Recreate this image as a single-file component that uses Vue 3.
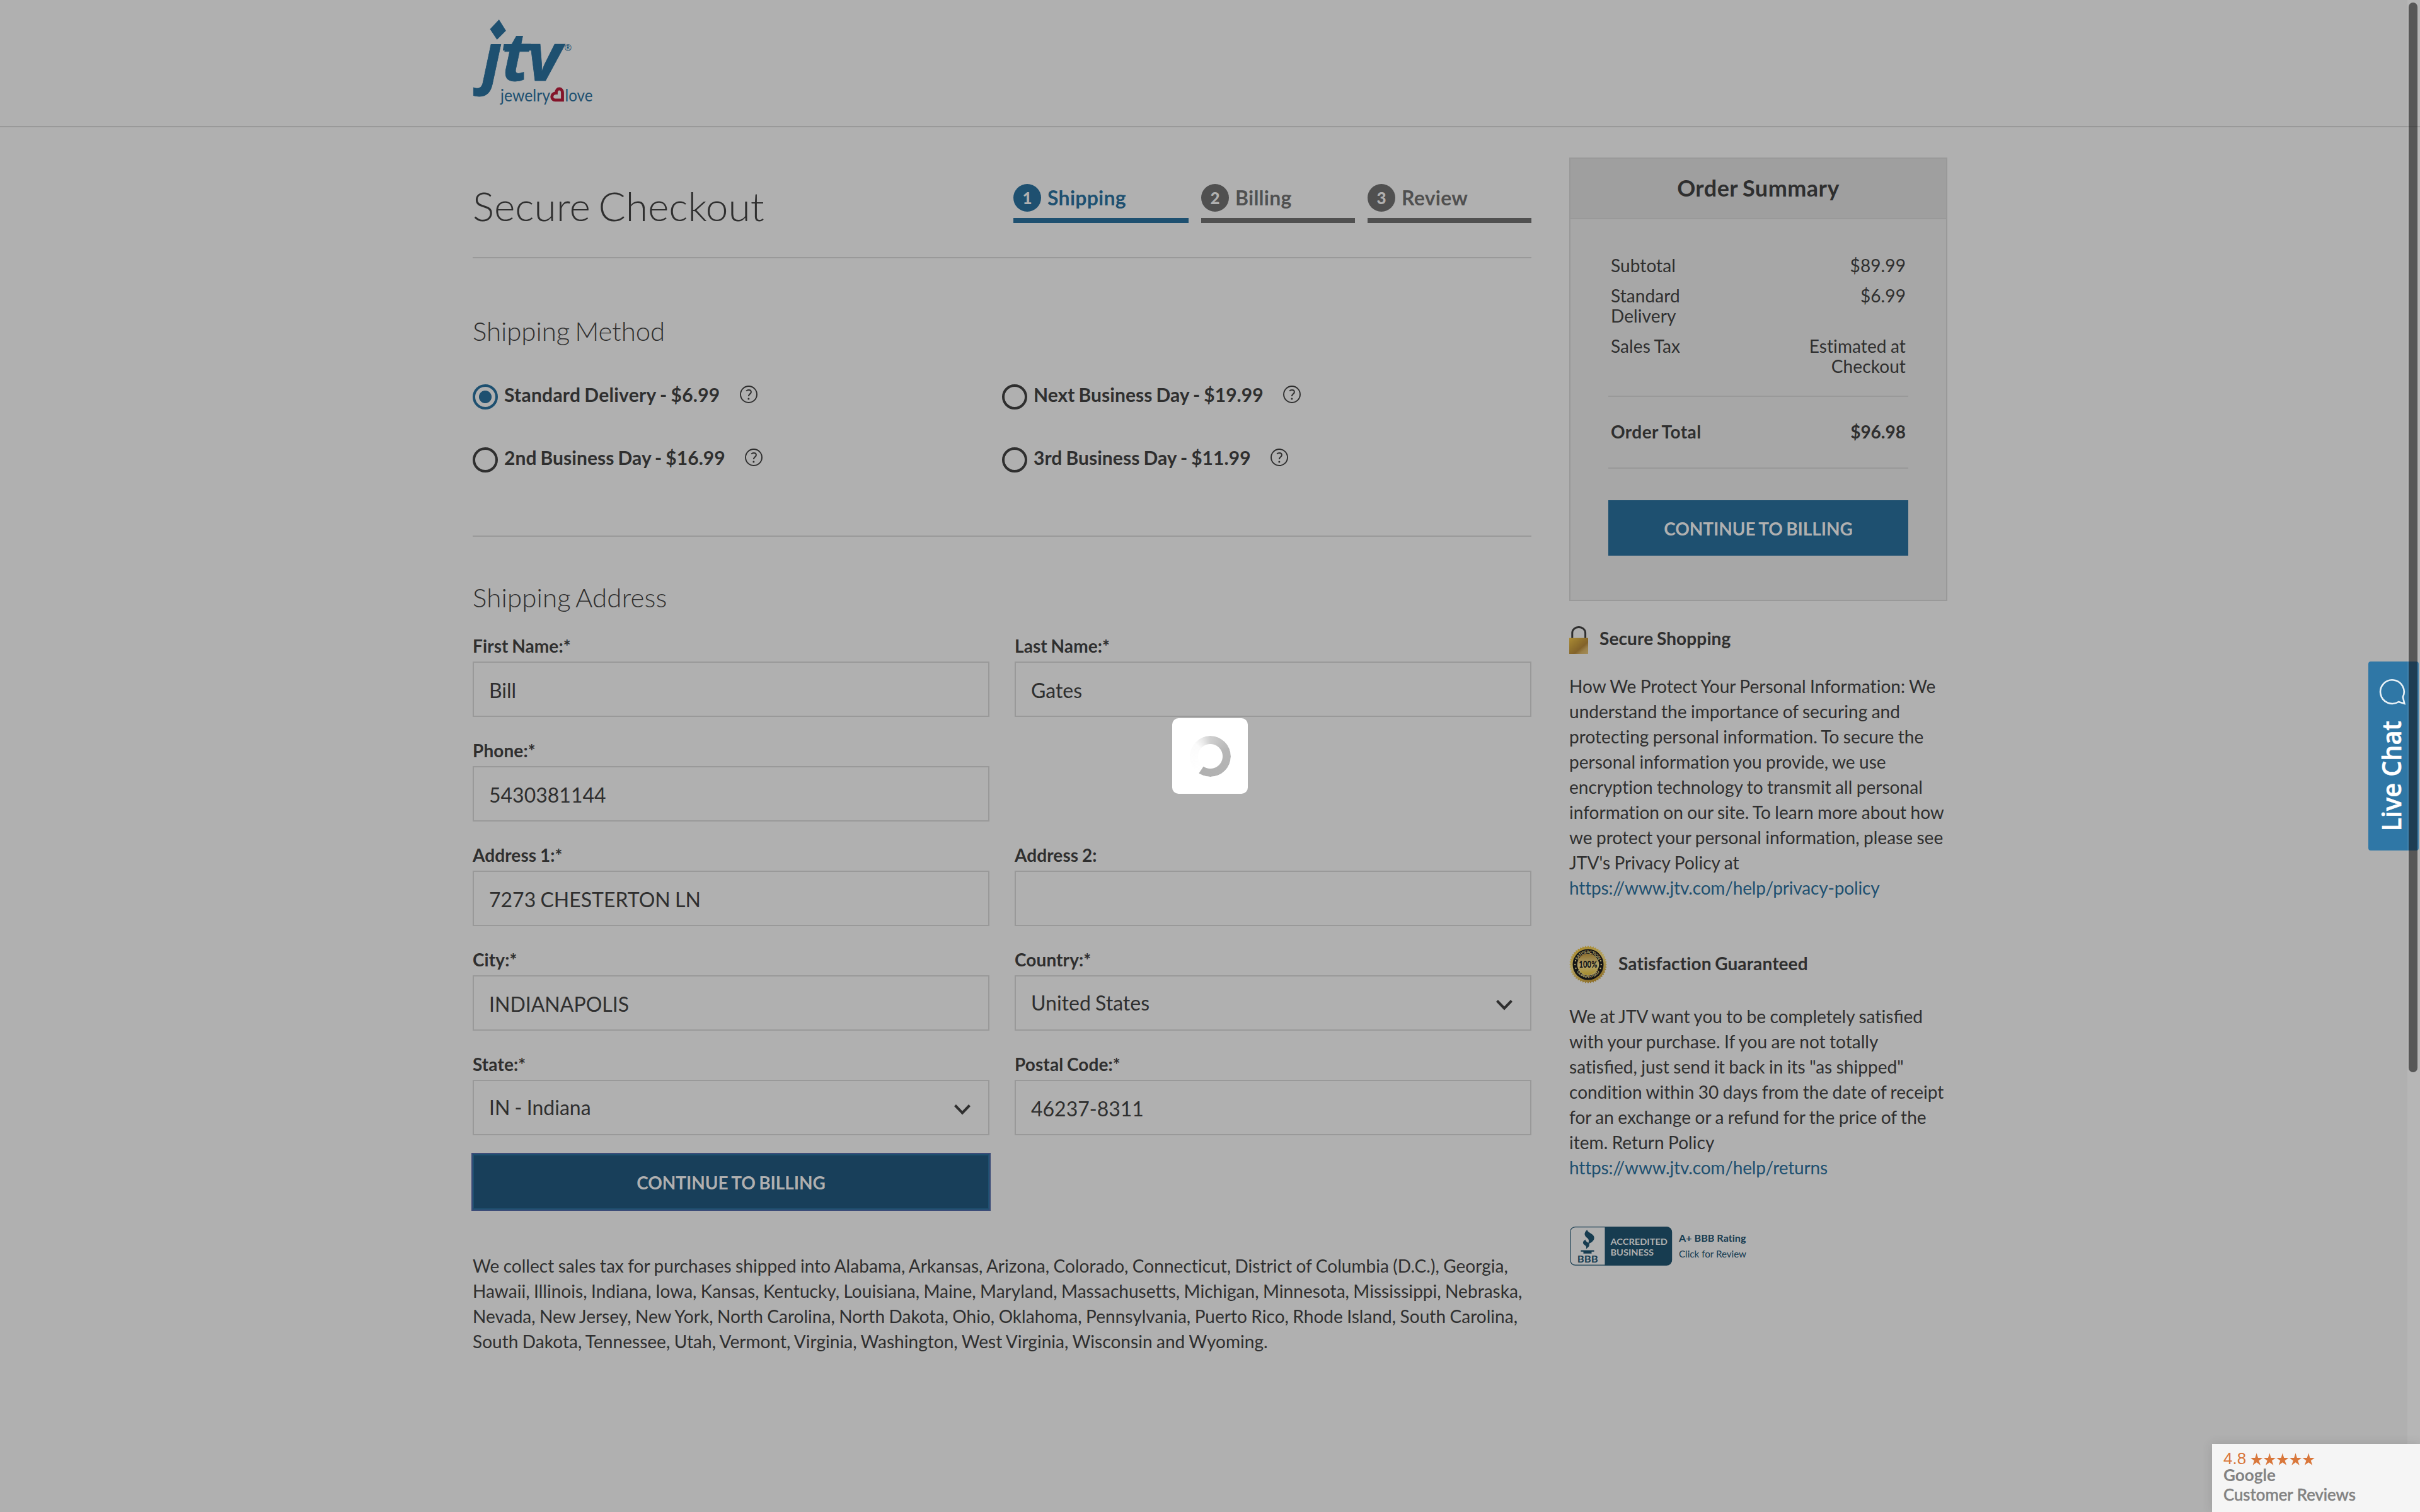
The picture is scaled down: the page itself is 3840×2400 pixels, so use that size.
<script setup>
const steps = [
  { n: 1, name: 'Shipping', active: true },
  { n: 2, name: 'Billing' },
  { n: 3, name: 'Review' },
]
const methods = [
  { label: 'Standard Delivery - $6.99', checked: true },
  { label: 'Next Business Day - $19.99' },
  { label: '2nd Business Day - $16.99' },
  { label: '3rd Business Day - $11.99' },
]
const fields = [
  { label: 'First Name:*', value: 'Bill' },
  { label: 'Last Name:*', value: 'Gates' },
  { label: 'Phone:*', value: '5430381144' },
  null,
  { label: 'Address 1:*', value: '7273 CHESTERTON LN' },
  { label: 'Address 2:', value: '' },
  { label: 'City:*', value: 'INDIANAPOLIS' },
  { label: 'Country:*', value: 'United States', select: true },
  { label: 'State:*', value: 'IN - Indiana', select: true },
  { label: 'Postal Code:*', value: '46237-8311' },
]
const taxLines = [
  'We collect sales tax for purchases shipped into Alabama, Arkansas, Arizona, Colorado, Connecticut, District of Columbia (D.C.), Georgia,',
  'Hawaii, Illinois, Indiana, Iowa, Kansas, Kentucky, Louisiana, Maine, Maryland, Massachusetts, Michigan, Minnesota, Mississippi, Nebraska,',
  'Nevada, New Jersey, New York, North Carolina, North Dakota, Ohio, Oklahoma, Pennsylvania, Puerto Rico, Rhode Island, South Carolina,',
  'South Dakota, Tennessee, Utah, Vermont, Virginia, Washington, West Virginia, Wisconsin and Wyoming.',
]
const secureLines = [
  'How We Protect Your Personal Information: We',
  'understand the importance of securing and',
  'protecting personal information. To secure the',
  'personal information you provide, we use',
  'encryption technology to transmit all personal',
  'information on our site. To learn more about how',
  'we protect your personal information, please see',
  "JTV's Privacy Policy at",
]
const satisfiedLines = [
  'We at JTV want you to be completely satisfied',
  'with your purchase. If you are not totally',
  'satisfied, just send it back in its "as shipped"',
  'condition within 30 days from the date of receipt',
  'for an exchange or a refund for the price of the',
  'item. Return Policy',
]
// Serrated edge of the guarantee seal
const sealPoints = Array.from({ length: 88 }, (_, i) => {
  const r = i % 2 ? 27.6 : 30
  const a = (i / 88) * Math.PI * 2
  return `${(30 + r * Math.cos(a)).toFixed(2)},${(30 + r * Math.sin(a)).toFixed(2)}`
}).join(' ')
const starX = [0, 20.6, 41.2, 61.8, 82.4]
</script>

<template>
  <div class="page">
    <header class="top">
      <div class="wrap">
        <svg class="logo" width="200" height="180" viewBox="0 0 200 180">
          <defs>
            <clipPath id="stem"><rect x="-10" y="70" width="80" height="100" /></clipPath>
          </defs>
          <g fill="#1e5070">
            <path d="M41.8 31 52.9 48.7 38.6 63 27.5 46.3z" />
            <g class="mark">
              <g clip-path="url(#stem)"><text x="15" y="127.5">j</text></g>
              <text x="46" y="127.5">t</text>
              <text x="86.500" y="127.5">v</text>
            </g>
            <path d="M49.5 70h55v10.300h-56.600z" />
            <text class="reg" x="145.500" y="81">®</text>
            <text class="tag" x="44" y="160.500" textLength="79" lengthAdjust="spacingAndGlyphs">jewelry</text>
            <text class="tag" x="146.500" y="160.500" textLength="44" lengthAdjust="spacingAndGlyphs">love</text>
          </g>
          <path d="M142.500 158.800h-11.500c-7 0-7.500-11 1.500-11.200 0-9 10-8.500 10-.5z" fill="none" stroke="#84142a" stroke-width="4.800" />
        </svg>
      </div>
    </header>

    <div class="wrap columns">
      <main>
        <div class="title-row">
          <h1>Secure Checkout</h1>
          <ol class="steps">
            <li v-for="s in steps" :key="s.n" :class="{ active: s.active }">
              <b>{{ s.n }}</b><span>{{ s.name }}</span>
            </li>
          </ol>
        </div>

        <section class="methods">
          <h2>Shipping Method</h2>
          <div class="radios">
            <div v-for="m in methods" :key="m.label" class="method">
              <i class="radio" :class="{ checked: m.checked }"></i>
              <span>{{ m.label }}</span>
              <svg width="28" height="28" viewBox="0 0 28 28" fill="none" stroke="#2f2f2f">
                <circle cx="14" cy="14" r="13" stroke-width="1.900" />
                <path d="M10.200 8.600c1-1.200 2.300-1.700 3.800-1.700 2.300 0 3.900 1.300 3.900 3.300 0 3.100-4 3.200-4 6.900" stroke-width="2" />
                <circle cx="13.900" cy="21" r="1.500" fill="#2f2f2f" stroke="none" />
              </svg>
            </div>
          </div>
        </section>

        <section class="address">
          <h2>Shipping Address</h2>
          <div class="fields">
            <div v-for="(f, i) in fields" :key="i" class="field">
              <template v-if="f">
                <label>{{ f.label }}</label>
                <div class="input" :class="{ select: f.select }">
                  <span>{{ f.value }}</span>
                  <svg v-if="f.select" width="28" height="18" viewBox="0 0 28 18" fill="none" stroke="#2f2f2f" stroke-width="4">
                    <path d="M2.500 2.500 14 14.500 25.500 2.500" />
                  </svg>
                </div>
              </template>
            </div>
          </div>
          <div class="button focused">CONTINUE TO BILLING</div>
        </section>

        <p class="copy tax"><span v-for="l in taxLines" :key="l">{{ l }}</span></p>
      </main>

      <aside>
        <div class="summary">
          <h3>Order Summary</h3>
          <div class="summary-body">
            <dl>
              <div><dt>Subtotal</dt><dd>$89.99</dd></div>
              <div><dt>Standard<br />Delivery</dt><dd>$6.99</dd></div>
              <div><dt>Sales Tax</dt><dd>Estimated at<br />Checkout</dd></div>
            </dl>
            <div class="total"><span>Order Total</span><span class="sum">$96.98</span></div>
            <div class="button">CONTINUE TO BILLING</div>
          </div>
        </div>

        <div class="note secure">
          <svg width="30" height="44" viewBox="0 0 30 44">
            <defs>
              <linearGradient id="brass" x1="0" y1="0" x2="1" y2="1">
                <stop offset="0" stop-color="#ab8b35" /><stop offset=".35" stop-color="#93742d" />
                <stop offset=".62" stop-color="#82622a" /><stop offset=".78" stop-color="#9a8049" /><stop offset="1" stop-color="#a38d5a" />
              </linearGradient>
            </defs>
            <path d="M4.800 21V11c0-12.700 20.800-12.700 20.800 0v10" fill="none" stroke="#2f2f2f" stroke-width="3" />
            <rect y="18.700" width="30" height="25.300" fill="url(#brass)" />
          </svg>
          <strong>Secure Shopping</strong>
        </div>
        <p class="copy"><span v-for="l in secureLines" :key="l">{{ l }}</span><a>https://www.jtv.com/help/privacy-policy</a></p>

        <div class="note satisfied">
          <svg width="60" height="60" viewBox="0 0 60 60">
            <defs>
              <linearGradient id="gold" x1=".3" y1="0" x2=".7" y2="1">
                <stop offset="0" stop-color="#a8892b" /><stop offset=".45" stop-color="#b5a360" /><stop offset="1" stop-color="#8a6a22" />
              </linearGradient>
              <linearGradient id="face" x1="0" y1="0" x2="0" y2="1">
                <stop offset="0" stop-color="#8c6f30" /><stop offset=".55" stop-color="#b3a36c" /><stop offset="1" stop-color="#a58a28" />
              </linearGradient>
              <path id="arcTop" d="M12.500 30a17.500 17.500 0 0 1 35 0" />
              <path id="arcBottom" d="M8.700 30a21.300 21.300 0 0 0 42.600 0" />
            </defs>
            <polygon :points="sealPoints" fill="url(#gold)" />
            <circle cx="30" cy="30" r="24.500" fill="#141414" />
            <circle cx="30" cy="30" r="17.300" fill="url(#face)" />
            <g class="seal-ring" fill="#b3a36c">
              <text><textPath href="#arcTop" startOffset="50%" text-anchor="middle" textLength="41">SATISFACTION</textPath></text>
              <text><textPath href="#arcBottom" startOffset="50%" text-anchor="middle" textLength="43">GUARANTEED</textPath></text>
              <circle cx="10" cy="24" r="1.200" /><circle cx="9.200" cy="30" r="1.200" /><circle cx="10.500" cy="36" r="1.200" />
              <circle cx="50" cy="24" r="1.200" /><circle cx="50.800" cy="30" r="1.200" /><circle cx="49.500" cy="36" r="1.200" />
            </g>
            <text class="seal-num" x="15.500" y="35" textLength="29" lengthAdjust="spacingAndGlyphs">100%</text>
          </svg>
          <strong>Satisfaction Guaranteed</strong>
        </div>
        <p class="copy">
          <span v-for="l in satisfiedLines" :key="l"><template v-for="(part, i) in l.split('fi')" :key="i"><em v-if="i">fi</em>{{ part }}</template></span>
          <a>https://www.jtv.com/help/returns</a>
        </p>

        <svg class="bbb" width="290" height="64" viewBox="0 0 290 64">
          <rect x="1.600" y="1.600" width="161" height="60.500" rx="8" fill="none" stroke="#173c50" stroke-width="1.200" />
          <path d="M56.500 1H154a9 9 0 0 1 9 9v43.500a9 9 0 0 1-9 9H56.500z" fill="#173c50" />
          <g fill="#173c50">
            <path d="M28.500 6c-6 5-4.500 9.500 0 13 3.500 2.800 3 6 .8 10C40.500 25 42.500 17.500 36 13c-4.500-3-7-4-7.500-7z" />
            <path d="M25.500 21.500c-5.500 4-4 7 0 9.500 1.700 1.200 1.900 3 1.200 5.500 6-4 7-7.500 2.500-10.500-2.200-1.500-3.200-2.500-3.700-4.500z" />
            <path d="M18.500 38.500h21v2.300h-21zM22.500 40.800h13v3h-13z" />
            <text class="bb" x="12.800" y="58" font-size="16" textLength="33" lengthAdjust="spacingAndGlyphs">BBB</text>
            <text class="bb" x="174" y="25" font-size="14.500" textLength="106.500" lengthAdjust="spacingAndGlyphs">A+ BBB Rating</text>
            <text class="light" x="174" y="50" font-size="15.500" textLength="107" lengthAdjust="spacingAndGlyphs">Click for Review</text>
          </g>
          <g fill="#b0b0b0">
            <text class="bb" x="65.500" y="30" font-size="14" textLength="90.500" lengthAdjust="spacingAndGlyphs">ACCREDITED</text>
            <text class="bb" x="65.500" y="46.800" font-size="14" textLength="68.500" lengthAdjust="spacingAndGlyphs">BUSINESS</text>
          </g>
        </svg>
      </aside>
    </div>

    <div class="loader"><i></i></div>

    <svg class="chat" width="80" height="300" viewBox="0 0 80 300">
      <rect width="80" height="300" rx="4" fill="#2f77a6" />
      <path d="M48 64 57.300 66.800 54.800 56.400A18.800 18.800 0 1 0 48 64z" fill="none" stroke="#eaf2f7" stroke-width="2.600" />
      <text transform="translate(52 269.500) rotate(-90)" textLength="175.500" lengthAdjust="spacingAndGlyphs">Live Chat</text>
    </svg>

    <div class="track"><i></i></div>

    <svg class="google" width="330" height="108" viewBox="0 0 330 108">
      <rect width="330" height="108" fill="#f5f5f5" />
      <text x="18" y="31.500" class="score">4.8</text>
      <path v-for="x in starX" :key="x" :transform="`translate(${61 + x} 14.500)`" d="M9.700 0 12 7.400h7.500l-6.100 4.500 2.500 7.300-6.200-4.500-6.200 4.500 2.500-7.300L0 7.400h7.400z" fill="#d9773b" />
      <text x="18" y="59" class="g-name" textLength="83" lengthAdjust="spacingAndGlyphs">Google</text>
      <text x="18" y="89.600" class="g-sub" textLength="210" lengthAdjust="spacingAndGlyphs">Customer Reviews</text>
    </svg>
  </div>
</template>

<style>
body { margin: 0; background: #b0b0b0; overflow: hidden; }
</style>

<style scoped>
.page {
  position: relative;
  width: 3840px;
  height: 2400px;
  overflow: hidden;
  background: #b0b0b0;
  color: #2f2f2f;
  font-family: Lato, sans-serif;
  font-size: 28px;
  font-variant-ligatures: none;
}
h1, h2, h3, p, ol, dl, dd { margin: 0; padding: 0; }
h1, h2 { word-spacing: -.075em; }
h3, .method, label, .button, .note, .total { word-spacing: -.045em; }
.copy, .input, dl { word-spacing: -.03em; }
i, em { font-style: normal; }
svg { display: block; flex: none; }
.wrap { width: 2340px; margin: 0 auto; }
.top { height: 200px; border-bottom: 2px solid #999; }
.mark { font: italic 700 106px "Open Sans", sans-serif; stroke: #1e5070; stroke-width: .8px; }
.reg { font: 14px "Open Sans", sans-serif; }
.tag { font: 400 27px Lato, sans-serif; }

.columns { display: flex; justify-content: space-between; }
main { width: 1680px; }
.title-row {
  display: flex;
  justify-content: space-between;
  height: 206px;
  border-bottom: 2px solid #999;
}
h1 { margin-top: 85px; font-size: 64px; font-weight: 300; line-height: 80px; }
h2 { font-size: 42px; font-weight: 300; line-height: 50px; letter-spacing: -.08px; }
.steps {
  display: grid;
  grid-template-columns: 278px 244px 260px;
  gap: 20px;
  height: 62px;
  margin-top: 90px;
  list-style: none;
}
.steps li {
  display: flex;
  border-bottom: 8px solid #505050;
  color: #505050;
  font-size: 32px;
  font-weight: 700;
  line-height: 43px;
}
.steps span { letter-spacing: .25px; }
.steps b {
  width: 44px;
  height: 44px;
  margin-right: 10px;
  border-radius: 50%;
  background: #505050;
  color: #b0b0b0;
  font-size: 26px;
  font-weight: 900;
  line-height: 44px;
  text-align: center;
}
.steps .active { color: #1e5070; border-color: #1e5070; }
.steps .active b { background: #1e5070; }

.methods { padding: 90px 0 100px; border-bottom: 2px solid #999; }
.radios { display: grid; grid-template-columns: 1fr 1fr; row-gap: 60px; margin-top: 60px; }
.method { display: flex; height: 40px; font-size: 30px; font-weight: 700; line-height: 32px; }
.method span { margin: 0 31.500px 0 10px; letter-spacing: .06px; }
.method .checked + span { letter-spacing: .25px; }
.method svg { margin-top: 2px; }
.radio { box-sizing: border-box; width: 40px; height: 40px; border: 4px solid #2f2f2f; border-radius: 50%; }
.radio.checked { border-color: #1e5070; background: radial-gradient(circle, #1e5070 9.600px, transparent 10.400px); }

.address h2 { margin-top: 71px; letter-spacing: .15px; }
.fields { display: grid; grid-template-columns: 820px 820px; gap: 36px 40px; margin-top: 35px; }
.field label { display: block; font-weight: 700; line-height: 34px; letter-spacing: .1px; }
.input {
  box-sizing: border-box;
  display: flex;
  justify-content: space-between;
  height: 88px;
  margin-top: 8px;
  padding: 0 27px 0 24px;
  border: 2px solid #999;
  font-size: 32px;
  line-height: 87px;
}
.select { line-height: 84px; }
.select svg { margin-top: 36px; }
.button {
  height: 88px;
  background: #1e5070;
  color: #b0b0b0;
  font-weight: 700;
  line-height: 90px;
  letter-spacing: -.06px;
  text-align: center;
}
.button.focused {
  box-sizing: border-box;
  width: 820px;
  margin-top: 30px;
  border: 2px solid #1e5070;
  outline: 2px solid #3c4c78;
  background: #183f5a;
  line-height: 86px;
}
.copy { line-height: 40px; white-space: nowrap; letter-spacing: .04px; }
.copy span, .copy a { display: block; }
.copy a { color: #1e5070; letter-spacing: -.16px; }
.copy em { letter-spacing: 0; font-variant-ligatures: common-ligatures; }
.tax { margin-top: 69px; }

aside { width: 600px; margin-top: 48px; }
.summary { box-sizing: border-box; height: 704px; border: 2px solid #999; background: #a7a7a7; }
.summary h3 {
  height: 94px;
  border-bottom: 2px solid #999;
  background: #9f9f9f;
  font-size: 36px;
  font-weight: 700;
  line-height: 93px;
  letter-spacing: .45px;
  text-align: center;
}
.summary-body { padding: 0 60px; }
dl { display: grid; gap: 16px; height: 223px; align-content: start; padding: 57px 4px 0; line-height: 32px; letter-spacing: .1px; }
dl div, .total { display: flex; justify-content: space-between; }
dd { text-align: right; }
.total {
  height: 112px;
  margin-bottom: 50px;
  padding: 0 4px;
  border: solid #999;
  border-width: 2px 0;
  font-weight: 700;
  line-height: 110px;
  letter-spacing: .45px;
}
.sum { letter-spacing: 0; }
.note { display: flex; align-items: flex-start; letter-spacing: .12px; }
.note strong { margin-left: 18px; font-weight: 700; }
.secure { margin: 40px 0 31px; }
.secure strong { line-height: 39px; }
.satisfied { margin: 72px 0 32px; }
.satisfied strong { line-height: 56px; }
.bbb { margin-top: 73px; }
.bb { font-family: Lato, sans-serif; font-weight: 700; }
.light { font-family: Lato, sans-serif; font-weight: 400; }
.seal-ring { font: 700 7px Lato, sans-serif; letter-spacing: 0; }
.seal-num { font: 900 14.500px Lato, sans-serif; fill: #141414; }

.loader {
  position: absolute;
  left: 1860px;
  top: 1140px;
  display: grid;
  place-items: center;
  width: 120px;
  height: 120px;
  border-radius: 10px;
  background: #fff;
}
.loader i {
  width: 65px;
  height: 65px;
  border-radius: 50%;
  background: conic-gradient(#cfcfcf, #b6b6b6 70deg, #b0b0b0 213deg, #fff 215deg, #fbfbfb 310deg, #e8e8e8 335deg, #cfcfcf);
  mask: radial-gradient(circle, transparent 19px, #000 20px);
}
.chat { position: absolute; left: 3758px; top: 1050px; }
.chat text { font: 600 41px "Open Sans", sans-serif; fill: #fff; stroke: #fff; stroke-width: .6px; }
.track {
  position: absolute;
  top: 0;
  right: 0;
  box-sizing: border-box;
  width: 20px;
  height: 2400px;
  padding: 4px 4px 0 2px;
  background: rgba(255, 255, 255, .08);
}
.track i { display: block; height: 1698px; border-radius: 7px; background: rgba(0, 0, 0, .52); }
.google { position: absolute; right: 0; bottom: 0; box-shadow: 0 0 16px rgba(0, 0, 0, .12); }
.score { font: 26px "Liberation Sans", sans-serif; fill: #d9773b; }
.g-name { font: 700 27px Lato, sans-serif; fill: #828282; }
.g-sub { font: 500 27px Lato, sans-serif; fill: #828282; stroke: #828282; stroke-width: .5px; }
</style>
